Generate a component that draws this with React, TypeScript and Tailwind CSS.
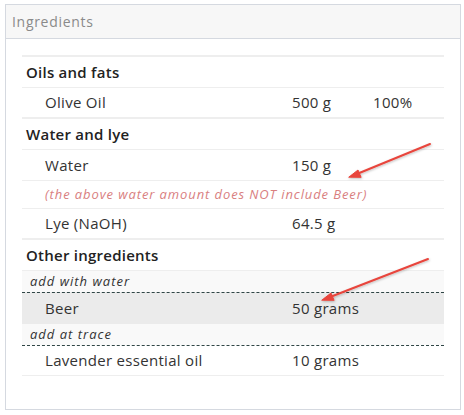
import React from "react";

const font = { fontFamily: '"Open Sans", "Noto Sans", sans-serif' };

function GroupRow({ label }: { label: string }) {
  return (
    <div className="h-[32px] border-t-2 border-[#eeeeee] flex items-center pl-[4px] text-[15px] tracking-[0.25px] font-semibold text-[#222]">
      {label}
    </div>
  );
}

function ItemRow({
  name,
  amount,
  pct,
  h = "h-[30px]",
}: {
  name: string;
  amount: string;
  pct?: string;
  h?: string;
}) {
  return (
    <div className={`${h} border-t border-[#eeeeee] flex items-center text-[15px] tracking-[0.3px] text-[#333]`}>
      <div className="w-[265px] pl-[23px]">{name}</div>
      <div className="w-[81px] pl-[5px]">{amount}</div>
      <div className="flex-1 pl-[5px]">{pct ?? ""}</div>
    </div>
  );
}

export default function App() {
  return (
    <div className="relative w-[464px] h-[415px] bg-white pt-[4px] pl-[5px]" style={font}>
      <div className="w-[456px] h-[406px] border border-[#d5d9e0] bg-white">
        <div className="h-[34px] border-b border-[#d5d9e0] bg-[#f7f7f7] flex items-center pl-[6px] text-[14px] tracking-[0.7px] text-[#8a8a8a]">
          Ingredients
        </div>
        <div className="px-[16px] pt-[16px]">
          <div className="w-[422px]">
            <GroupRow label="Oils and fats" />
            <ItemRow name="Olive Oil" amount="500 g" pct="100%" />
            <GroupRow label="Water and lye" />
            <ItemRow name="Water" amount="150 g" h="h-[31px]" />
            <div className="h-[28px] border-t border-[#eeeeee] flex items-center pl-[23px] text-[13px] tracking-[0.9px] italic text-[#d9807f]">
              (the above water amount does NOT include Beer)
            </div>
            <ItemRow name="Lye (NaOH)" amount="64.5 g" h="h-[30px]" />
            <GroupRow label="Other ingredients" />
            <div className="h-[22px] border-t border-[#eeeeee] bg-[#f9f9f9] flex items-center pl-[8px] text-[13px] tracking-[1px] italic text-[#333]">
              add with water
            </div>
            <div className="h-[32px] border-t border-dashed border-[#2f4545] bg-[#ebebeb] flex items-center text-[15px] tracking-[0.3px] text-[#333]">
              <div className="w-[265px] pl-[23px]">Beer</div>
              <div className="w-[81px] pl-[5px]">50 grams</div>
              <div className="flex-1" />
            </div>
            <div className="h-[21px] bg-[#f9f9f9] flex items-center pl-[8px] text-[13px] tracking-[1px] italic text-[#333]">
              add at trace
            </div>
            <div className="h-[30px] border-t border-dashed border-[#2f4545] flex items-center text-[15px] tracking-[0.3px] text-[#333]">
              <div className="w-[265px] pl-[23px]">Lavender essential oil</div>
              <div className="w-[81px] pl-[5px]">10 grams</div>
              <div className="flex-1" />
            </div>
            <div className="border-t border-[#eeeeee]" />
          </div>
        </div>
      </div>
      <svg className="absolute left-0 top-0 pointer-events-none" width="464" height="415">
        <defs>
          <filter id="sh" x="-20%" y="-20%" width="140%" height="140%">
            <feDropShadow dx="0.5" dy="1" stdDeviation="0.8" floodColor="#000" floodOpacity="0.25" />
          </filter>
        </defs>
        <g filter="url(#sh)" stroke="#e8453c" strokeWidth="2" strokeLinecap="round" fill="#e8453c">
          <line x1="430" y1="144" x2="352" y2="176" />
          <polygon points="349,177 358,170 361,177" strokeWidth="1" />
          <line x1="428" y1="259" x2="325" y2="299" />
          <polygon points="322,300 331,293 334,300" strokeWidth="1" />
        </g>
      </svg>
    </div>
  );
}
